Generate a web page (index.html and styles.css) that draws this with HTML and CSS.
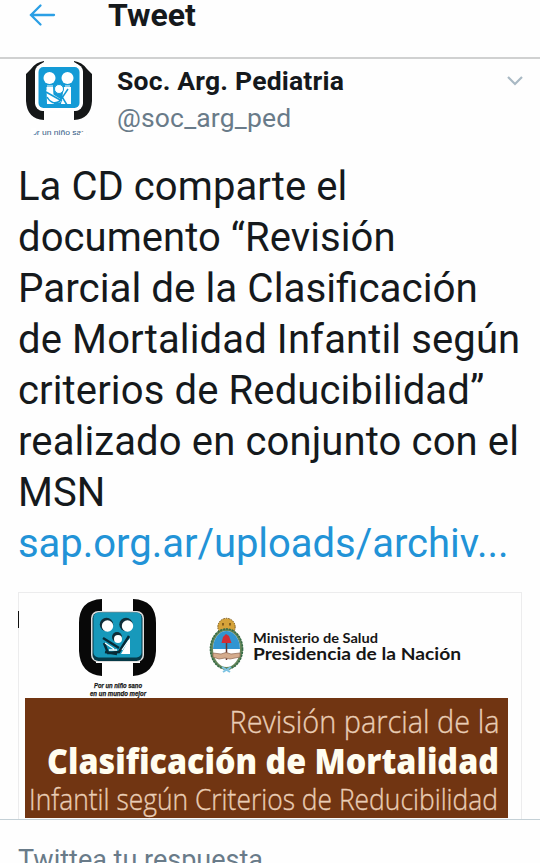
FILE: index.html
```html
<!DOCTYPE html>
<html lang="es">
<head>
<meta charset="utf-8">
<title>Tweet</title>
<link rel="stylesheet" href="styles.css">
</head>
<body>
<header class="topbar">
  <svg class="back" width="28" height="24" viewBox="0 0 28 24"><path d="M26 12H3M12.500 2.500L3 12l9.500 9.500"/></svg>
  <h1>Tweet</h1>
</header>
<main class="tweet">
  <section class="author">
    <svg class="avatar" width="76" height="82" viewBox="0 0 76 82">
      <path d="M26 2Q18 3 13 10L8 15V42Q9 60 26 61V52Q17 51 17 41V16Q17 7 26 3ZM56 2Q64 3 69 10L74 15V42Q73 60 56 61V52Q65 51 65 41V16Q65 7 56 3Z" fill="#151718"/>
      <rect x="17" y="5" width="48" height="47" rx="8" fill="#fff"/>
      <rect x="20.500" y="8" width="41" height="41" rx="5" fill="#149bd6"/>
      <g fill="#fff"><circle cx="31.500" cy="19" r="6"/><circle cx="49.500" cy="19" r="6"/><path d="M28.500 28H35L36 45H29ZM46 28H53V45H43Z"/></g>
      <path d="M29 27H35M47 27H52" stroke="#fff"/>
      <path d="M28 31L44 41Q44 44 37 44Q31 42 28 31Z" fill="#fff"/>
      <circle cx="41" cy="30" r="4.500" fill="#fff" stroke="#149bd6"/>
      <path d="M28 33L44 42M29 38Q34 47 42 42L50 30M43 36L49 46" fill="none" stroke="#149bd6" stroke-width="1.500"/>
      <text x="14" y="76" font-size="7" textLength="54" lengthAdjust="spacingAndGlyphs" fill="#315b86">or un niño san</text>
      <path d="M13 69H18V73.500L13 78ZM62 74L68 71V79H62Z" fill="#fff"/>
    </svg>
    <div class="names"><div class="name">Soc. Arg. Pediatria</div><div class="handle">@soc_arg_ped</div></div>
    <svg class="chevron" width="18" height="12" viewBox="0 0 18 12"><path d="M2 2L9 9L16 2"/></svg>
  </section>
  <p class="body"><span class="snug">La CD comparte el</span><br><span class="snug">documento “Revisión</span><br><span class="ligated">Parcial de la Clasificación</span><br><span>de Mortalidad Infantil según</span><br><span>criterios de Reducibilidad”</span><br><span>realizado en conjunto con el</span><br><span class="snug">MSN</span><br><a>sap.org.ar/uploads/archiv...</a></p>
  <section class="card">
    <svg width="504" height="227" viewBox="18 592 504 227">
      <path d="M18 611H19V628H18Z" fill="#111"/>
      <path d="M102 599Q79 600 79 623V651Q80 674 102 676V663H96V613H102ZM133 599Q156 600 156 623V651Q155 674 133 676V663H140V613H133Z" fill="#080808"/>
      <rect x="91" y="611" width="53" height="51" rx="7" fill="#ddd"/>
      <rect x="92.500" y="612.500" width="50" height="48.500" rx="6" fill="#073a48"/>
      <rect x="93.500" y="612.500" width="48" height="45" rx="5" fill="#1799bb"/>
      <g fill="#102d38"><circle cx="106.500" cy="624.500" r="6.700"/><circle cx="126" cy="624.500" r="6.700"/><circle cx="117" cy="637" r="5"/></g>
      <g fill="#fff"><circle cx="107.500" cy="626" r="5.700"/><circle cx="127.500" cy="626" r="5.700"/><circle cx="118" cy="639" r="4"/><path d="M130 638V654H121Z"/></g>
      <path d="M103 638L119 648M104 643L108 653L119 652L129 636M105 652L117 654" fill="none" stroke="#082b37" stroke-width="2.500"/>
      <path d="M105 643L114 649M109 650H117M122 650L129 640" fill="none" stroke="#fff" stroke-width="1.300"/>
      <g class="motto"><text x="94" y="688" textLength="48" lengthAdjust="spacingAndGlyphs">Por un niño sano</text><text x="90" y="695.500" textLength="56" lengthAdjust="spacingAndGlyphs">en un mundo mejor</text></g>
      <circle cx="226.500" cy="627" r="8.700" fill="#d5a33a" stroke="#765518" stroke-dasharray="1.500 1"/>
      <path d="M223 623v2.500M230 623v2.500" stroke="#6b4915" stroke-width="1.500"/>
      <ellipse cx="226.500" cy="649" rx="16.500" ry="20.500" fill="#68885b"/>
      <ellipse cx="226.500" cy="649" rx="16" ry="20" fill="none" stroke="#356b48" stroke-width="1.700" stroke-dasharray="2 1"/>
      <ellipse cx="226.500" cy="649" rx="13.500" ry="18" fill="#fff"/>
      <path d="M213 649A13.500 18 0 0 1 240 649Z" fill="#3195d1"/>
      <path d="M226.500 640V660" stroke="#67382f" stroke-width="1.500"/>
      <path d="M221.500 643L223 637L226 634L229 636L231.500 643Z" fill="#d22d35"/>
      <path d="M213 653L221 654L226 652.500L231 654L240 653V657L230 659L225 658L219 659L213 657Z" fill="#d5ac8d" stroke="#8c6650" stroke-width=".7"/>
      <path d="M222 667L230 672M231 667L223 672" stroke="#7cc3e3" stroke-width="2"/>
      <g class="ministry"><text x="253" y="642.500" font-size="13.400" textLength="125" lengthAdjust="spacingAndGlyphs">Ministerio de Salud</text><text x="253" y="659.500" font-size="17.500" textLength="208" lengthAdjust="spacingAndGlyphs">Presidencia de la Nación</text></g>
      <rect x="25" y="698" width="483" height="120" fill="#713512"/>
      <g class="poster"><text x="229.500" y="733" font-size="32" textLength="270" lengthAdjust="spacingAndGlyphs">Revisión parcial de la</text><text class="strong" x="47" y="774" font-size="36" textLength="452" lengthAdjust="spacingAndGlyphs">Clasificación de Mortalidad</text><text x="29" y="810" font-size="30" textLength="469" lengthAdjust="spacingAndGlyphs">Infantil según Criterios de Reducibilidad</text></g>
    </svg>
  </section>
</main>
<footer class="reply">Twittea tu respuesta</footer>
</body>
</html>
```
FILE: styles.css
```css
* { box-sizing: border-box; }
body { margin: 0; width: 540px; height: 863px; overflow: hidden; background: #fefefe; color: #15191c; font-family: Roboto, sans-serif; display: flex; flex-direction: column; }
.topbar { height: 59px; flex: none; display: flex; align-items: flex-start; padding: 3px 0 0 28px; border-bottom: 2px solid #d0d1d1; }
.back { fill: none; stroke: #2b9fe5; stroke-width: 2.3; stroke-linecap: round; }
h1 { margin: -6px 0 0 52px; font-size: 32px; line-height: 36px; font-weight: 700; }
.tweet { flex: none; height: 760px; }
.author { height: 102px; padding-left: 18px; display: flex; }
.avatar { font-family: "Liberation Sans", sans-serif; flex: none; }
.names { margin: 3px 0 0 23px; }
.name { font-size: 26.5px; line-height: 37px; font-weight: 700; letter-spacing: .2px; white-space: nowrap; }
.handle { font-size: 26.5px; line-height: 37px; letter-spacing: .17px; color: #697b89; }
.chevron { margin: 16px 16px 0 auto; fill: none; stroke: #a9b9c4; stroke-width: 2.2; }
.body { margin: 0; padding-left: 18px; height: 431px; font-size: 40px; line-height: 51px; letter-spacing: .13px; white-space: nowrap; }
.body .snug { letter-spacing: .07px; }
.body .ligated { letter-spacing: 0; font-size: 40.4px; line-height: 1; }
.body a { color: #2293d7; letter-spacing: -.03px; }
.card { margin-left: 18px; width: 504px; height: 227px; border: 1px solid #ececed; border-bottom: 0; }
.card svg { display: block; margin: -1px; }
.motto { font: italic 700 7px "Liberation Sans", sans-serif; fill: #171717; stroke: #171717; stroke-width: .25px; }
.ministry { font-family: Lato, sans-serif; font-weight: 700; fill: #161616; }
.poster { font-family: "Open Sans", sans-serif; font-weight: 300; fill: #e9cdb5; stroke: #e9cdb5; stroke-width: .35px; }
.poster .strong { font-weight: 800; fill: #fffdf0; stroke: none; }
.reply { flex: none; height: 44px; border-top: 1px solid #c4d0d6; padding: 23px 0 0 18px; font-size: 27px; line-height: 34px; color: #697b89; overflow: hidden; }
```
